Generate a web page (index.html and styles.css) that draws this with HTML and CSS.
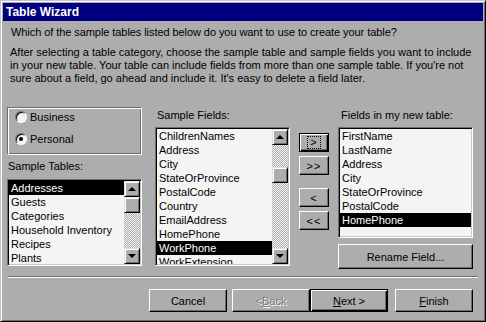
FILE: index.html
```html
<!DOCTYPE html>
<html lang="en">
<head>
    <meta charset="UTF-8">
    <title>Table Wizard</title>
    <link rel="stylesheet" href="styles.css">
</head>
<body>
    <div class="window">
        <div class="titlebar">Table Wizard</div>
        <div class="content">
            <p class="prompt">Which of the sample tables listed below do you want to use to create your table?</p>
            <p class="desc">After selecting a table category, choose the sample table and sample fields you want to include<br>in your new table. Your table can include fields from more than one sample table. If you're not<br>sure about a field, go ahead and include it. It's easy to delete a field later.</p>

            <div class="main">
                <div class="col col-left">
                    <div class="groupbox">
                        <div class="radio"><span class="radio-dot"></span>Business</div>
                        <div class="radio"><span class="radio-dot checked"></span>Personal</div>
                    </div>
                    <div class="label">Sample Tables:</div>
                    <div class="listbox tables">
                        <ul class="items">
                            <li class="selected">Addresses</li>
                            <li>Guests</li>
                            <li>Categories</li>
                            <li>Household Inventory</li>
                            <li>Recipes</li>
                            <li>Plants</li>
                        </ul>
                        <div class="scrollbar">
                            <div class="sb-btn"><span class="arrow-up"></span></div>
                            <div class="sb-btn thumb"></div>
                            <div class="track"></div>
                            <div class="sb-btn"><span class="arrow-down"></span></div>
                        </div>
                    </div>
                </div>

                <div class="col col-mid">
                    <div class="label">Sample Fields:</div>
                    <div class="listbox fields">
                        <ul class="items">
                            <li>ChildrenNames</li>
                            <li>Address</li>
                            <li>City</li>
                            <li>StateOrProvince</li>
                            <li>PostalCode</li>
                            <li>Country</li>
                            <li>EmailAddress</li>
                            <li>HomePhone</li>
                            <li class="selected">WorkPhone</li>
                            <li>WorkExtension</li>
                        </ul>
                        <div class="scrollbar">
                            <div class="sb-btn"><span class="arrow-up"></span></div>
                            <div class="track-top"></div>
                            <div class="sb-btn thumb"></div>
                            <div class="track"></div>
                            <div class="sb-btn"><span class="arrow-down"></span></div>
                        </div>
                    </div>
                </div>

                <div class="movers">
                    <button class="btn default"><span class="focus">&gt;</span></button>
                    <button class="btn">&gt;&gt;</button>
                    <button class="btn spaced">&lt;</button>
                    <button class="btn">&lt;&lt;</button>
                </div>

                <div class="col col-right">
                    <div class="label">Fields in my new table:</div>
                    <div class="listbox newfields">
                        <ul class="items">
                            <li>FirstName</li>
                            <li>LastName</li>
                            <li>Address</li>
                            <li>City</li>
                            <li>StateOrProvince</li>
                            <li>PostalCode</li>
                            <li class="selected">HomePhone</li>
                        </ul>
                    </div>
                    <button class="btn rename">Rename Field...</button>
                </div>
            </div>

            <div class="separator"></div>

            <div class="footer">
                <button class="btn wide cancel">Cancel</button>
                <button class="btn wide disabled">&lt; <u>B</u>ack</button>
                <button class="btn wide default next"><u>N</u>ext &gt;</button>
                <button class="btn wide"><u>F</u>inish</button>
            </div>
        </div>
    </div>
</body>
</html>
```

FILE: styles.css
```css
* {
    box-sizing: border-box;
}
html, body {
    margin: 0;
    padding: 0;
}
body {
    width: 486px;
    height: 322px;
    font-family: "Liberation Sans", Arial, sans-serif;
    font-size: 11px;
    color: #000;
    background: #adadad;
}
.window {
    width: 486px;
    height: 322px;
    border: 1px solid;
    border-color: #c4c4c4 #000 #000 #c4c4c4;
    box-shadow: inset 1px 1px #fff, inset -1px -1px #6e6e6e;
    padding: 2px;
    background: #adadad;
}
.titlebar {
    height: 18px;
    line-height: 18px;
    background: #000080;
    color: #fff;
    font-weight: bold;
    font-size: 12px;
    padding-left: 3px;
}
.content {
    padding: 5px 10px 0 4px;
}
.prompt {
    margin: 0 0 0 4px;
    line-height: 13px;
    letter-spacing: -0.07px;
}
.desc {
    margin: 7px 0 0 3px;
    line-height: 13px;
}

/* three columns + mover buttons */
.main {
    display: flex;
    align-items: flex-start;
    margin-top: 22px;
}
.col {
    width: 135px;
    display: flex;
    flex-direction: column;
}
.col-mid {
    margin-left: 13px;
}
.col-right {
    margin-left: 9px;
}
.label {
    line-height: 13px;
    white-space: nowrap;
}
.col-left .label {
    margin-top: 5px;
    padding-left: 1px;
}
.col-mid .label {
    margin-top: 2px;
    padding-left: 2px;
}
.col-right .label {
    margin-top: 2px;
    padding-left: 3px;
}

.groupbox {
    height: 48px;
    border: 1px solid;
    border-color: #6e6e6e #fff #fff #6e6e6e;
    box-shadow: inset 1px 1px #fff, inset -1px -1px #6e6e6e;
    padding: 2px 0 0 7px;
}
.radio {
    height: 14px;
    display: flex;
    align-items: center;
    margin-bottom: 8px;
}
.radio-dot {
    flex: none;
    width: 12px;
    height: 12px;
    border-radius: 50%;
    border: 1px solid;
    border-color: #6e6e6e #fff #fff #6e6e6e;
    box-shadow: inset 1px 1px #000;
    background: #f4f4f4;
    margin-right: 3px;
    display: flex;
    align-items: center;
    justify-content: center;
}
.radio-dot.checked::after {
    content: "";
    width: 4px;
    height: 4px;
    border-radius: 50%;
    background: #000;
}

.listbox {
    display: flex;
    background: #f4f4f4;
    border: 1px solid;
    border-color: #6e6e6e #fff #fff #6e6e6e;
    box-shadow: inset 1px 1px #000, inset -1px -1px #c8c8c8;
    padding: 1px;
    overflow: hidden;
}
.tables {
    height: 87px;
    margin-top: 6px;
}
.fields {
    height: 139px;
    margin-top: 5px;
}
.newfields {
    height: 111px;
    margin-top: 5px;
}
.items {
    flex: 1;
    list-style: none;
    margin: 0;
    padding: 0;
    overflow: hidden;
}
.items li {
    height: 14px;
    line-height: 14px;
    padding-left: 2px;
    white-space: nowrap;
}
.items li.selected {
    background: #000;
    color: #fff;
}

.scrollbar {
    width: 16px;
    flex: none;
    display: flex;
    flex-direction: column;
    background: repeating-conic-gradient(#f4f4f4 0 25%, #adadad 0 50%) 0 0 / 2px 2px;
}
.sb-btn {
    height: 16px;
    flex: none;
    background: #adadad;
    border: 1px solid;
    border-color: #e0e0e0 #000 #000 #e0e0e0;
    box-shadow: inset 1px 1px #fff, inset -1px -1px #6e6e6e;
    display: flex;
    align-items: center;
    justify-content: center;
}
.track {
    flex: 1;
}
.track-top {
    height: 22px;
    flex: none;
}
.arrow-up,
.arrow-down {
    width: 0;
    height: 0;
    border-left: 4px solid transparent;
    border-right: 4px solid transparent;
}
.arrow-up {
    border-bottom: 4px solid #000;
}
.arrow-down {
    border-top: 4px solid #000;
}

/* buttons */
.btn {
    font-family: inherit;
    font-size: 11px;
    color: #000;
    background: #adadad;
    border: 1px solid;
    border-color: #fff #000 #000 #fff;
    box-shadow: inset -1px -1px #6e6e6e;
    padding: 0;
    margin: 0;
    display: flex;
    align-items: center;
    justify-content: center;
}
.btn.default {
    border-color: #000;
    box-shadow: inset 1px 1px #fff, inset -1px -1px #000, inset -2px -2px #6e6e6e;
}
.btn.disabled {
    color: #7a7a7a;
    text-shadow: 1px 1px #fff;
}
.btn u {
    text-decoration: underline;
}
.movers {
    width: 30px;
    margin: 26px 0 0 9px;
    display: flex;
    flex-direction: column;
    gap: 4px;
}
.movers .btn {
    height: 19px;
    letter-spacing: 1px;
}
.movers .spaced {
    margin-top: 9px;
}
.focus {
    outline: 1px dotted #000;
    padding: 0 2px;
    line-height: 11px;
}
.rename {
    height: 25px;
    margin-top: 6px;
    width: 135px;
}

.separator {
    margin: 7px -5px 0 1px;
    border-top: 1px solid #6e6e6e;
    border-bottom: 1px solid #fff;
}
.footer {
    display: flex;
    justify-content: flex-end;
    margin-top: 11px;
}
.btn.wide {
    width: 78px;
    height: 23px;
}
.cancel {
    margin-right: 5px;
}
.next {
    margin-right: 7px;
}
```
